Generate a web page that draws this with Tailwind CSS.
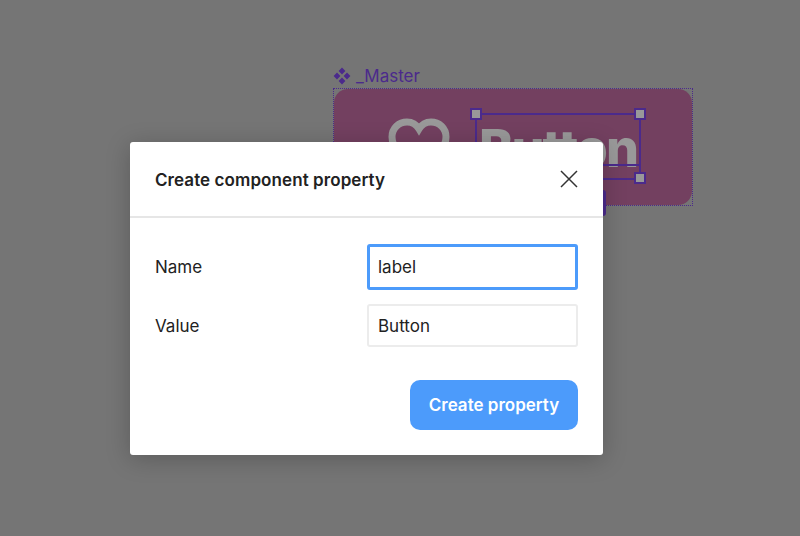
<!DOCTYPE html>
<html lang="en">
<head>
  <meta charset="UTF-8">
  <title>Create component property</title>
  <script src="https://cdn.jsdelivr.net/npm/@tailwindcss/browser@4"></script>
</head>
<body class="bg-[#757575]">
  <div class="relative w-[800px] h-[536px] overflow-hidden font-['Inter','Liberation_Sans',sans-serif] bg-[#757575]">

    <!-- canvas behind the dialog -->
    <div class="absolute left-[333px] top-[66px] flex items-center gap-[5px] text-[#4b2a8c] text-[17px] leading-[20px]">
      <svg width="18" height="18" viewBox="0 0 18 18" fill="#4b2a8c"><path d="M9 .6l3.4 3.4L9 7.4 5.6 4zM4 5.6L7.4 9 4 12.4.6 9zM14 5.6L17.4 9 14 12.4 10.6 9zM9 10.6l3.4 3.4L9 17.4 5.6 14z"/></svg>
      <span>_Master</span>
    </div>

    <div class="absolute left-[333px] top-[88px] w-[360px] h-[118px] border border-dotted border-[#4b2a8c]">
      <div class="w-full h-full rounded-[14px] bg-[#734060]"></div>
    </div>

    <svg class="absolute left-[388px] top-[118px]" width="62" height="56" viewBox="0 0 62 56" fill="none" stroke="#999999" stroke-width="7"><path d="M31 52C14 41 4 31 4 19 4 10 11 4 19 4c5 0 9 2 12 7 3-5 7-7 12-7 8 0 15 6 15 15 0 12-10 22-27 33z"/></svg>

    <div class="absolute left-[479px] top-[113px] text-[#999999] text-[52px] leading-[72px] font-extrabold tracking-[-2px]">Button</div>

    <div class="absolute left-[475px] top-[113px] w-[166px] h-[67px] border-2 border-[#4b2a8c]"></div>
    <div class="absolute left-[600px] top-[164px] w-[40px] h-[2px] bg-[#4b2a8c]"></div>
    <div class="absolute left-[470px] top-[108px] w-[12px] h-[12px] bg-[#999999] border-2 border-[#4b2a8c]"></div>
    <div class="absolute left-[634px] top-[108px] w-[12px] h-[12px] bg-[#999999] border-2 border-[#4b2a8c]"></div>
    <div class="absolute left-[634px] top-[172px] w-[12px] h-[12px] bg-[#999999] border-2 border-[#4b2a8c]"></div>
    <div class="absolute left-[590px] top-[190px] w-[16px] h-[26px] rounded-[3px] bg-[#4b2a8c]"></div>

    <!-- dialog -->
    <div class="absolute left-[130px] top-[142px] w-[473px] h-[313px] bg-white rounded-[3px] shadow-[0_4px_24px_rgba(0,0,0,0.22)] text-[#222222]">
      <div class="h-[76px] flex items-center justify-between pl-[25px] pr-[24px] border-b-2 border-[#e6e6e6]">
        <h1 class="pt-[3px] text-[17px] font-semibold tracking-[0.08px]">Create component property</h1>
        <svg width="20" height="20" viewBox="0 0 20 20" fill="none" stroke="#333333" stroke-width="1.5"><path d="M2 2l16 16M18 2L2 18"/></svg>
      </div>
      <div class="flex flex-col pl-[25px] pr-[25px] pt-[26px]">
        <div class="flex items-center justify-between h-[46px]">
          <label class="pt-[2px] text-[17px]">Name</label>
          <div class="w-[211px] h-[46px] flex items-center px-[8px] pt-[2px] border-[3px] border-[#4c9bfb] rounded-[3px] text-[17px]">label</div>
        </div>
        <div class="flex items-center justify-between h-[44px] mt-[13px]">
          <label class="pt-[3px] text-[17px]">Value</label>
          <div class="w-[211px] h-[43px] flex items-center px-[9px] pt-[3px] border-2 border-[#ececec] rounded-[3px] text-[17px]">Button</div>
        </div>
        <div class="flex justify-end mt-[33px]">
          <button class="w-[168px] h-[50px] pt-[2px] rounded-[10px] bg-[#4c9bfb] text-white text-[17px] font-semibold">Create property</button>
        </div>
      </div>
    </div>
  </div>
</body>
</html>
